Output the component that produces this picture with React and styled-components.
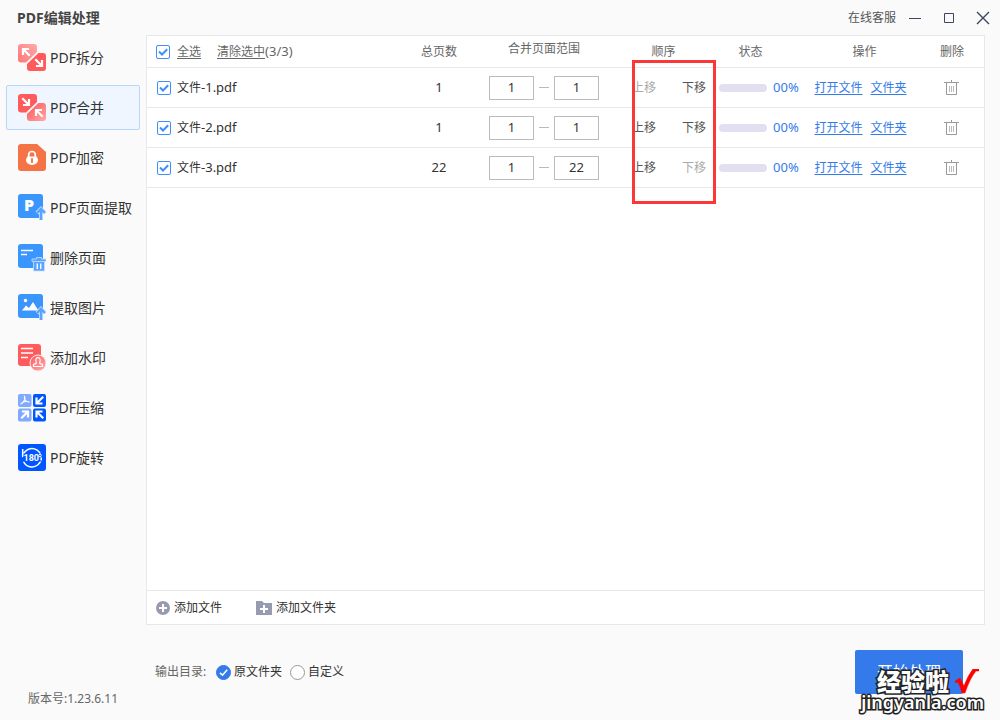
import React, { useState } from "react";
import { createGlobalStyle, styled } from "styled-components";

const GlobalStyle = createGlobalStyle`
  * {
    box-sizing: border-box;
  }

  body {
    margin: 0;
    background-color: #fafafa;
    color: #333;
    font-family: "Noto Sans", "Noto Sans CJK SC", sans-serif;
    font-size: 12px;
    line-height: 20px;
  }

  button, input {
    font: inherit;
    color: inherit;
  }

  button {
    padding: 0;
    border: 0;
    background: none;
    cursor: pointer;
  }

  svg {
    display: block;
  }
`;

const Window = styled.div`
  position: relative;
  display: flex;
  flex-direction: column;
  min-height: 100vh;
`;

const TitleBar = styled.header`
  display: flex;
  align-items: center;
  justify-content: space-between;
  height: 35px;
  padding: 0 3px 0 17px;
`;

const Title = styled.h1`
  margin: 0;
  font-size: 14px;
  font-weight: 700;
  color: #444;
`;

const WindowControls = styled.div`
  display: flex;
  align-items: center;
  gap: 5px;
  color: #555;
`;

const ControlButtons = styled.div`
  display: flex;
  gap: 6px;
`;

const ControlButton = styled.button`
  display: grid;
  place-items: center;
  width: 28px;
  height: 28px;
`;

const Body = styled.div`
  flex: 1;
  display: flex;
`;

const Sidebar = styled.aside`
  flex: none;
  display: flex;
  flex-direction: column;
  justify-content: space-between;
  width: 146px;
  padding: 0 6px 11px;
`;

const Menu = styled.nav`
  display: flex;
  flex-direction: column;
  gap: 5px;
`;

const MenuLink = styled.a`
  display: flex;
  align-items: center;
  gap: 4px;
  height: 45px;
  padding-left: 11px;
  border: 1px solid ${({ $active }) => ($active ? "#b9d6fd" : "transparent")};
  border-radius: 2px;
  background-color: ${({ $active }) => ($active ? "#eff6ff" : "transparent")};
  color: #333;
  font-size: 14px;
  text-decoration: none;
  white-space: nowrap;
`;

const Version = styled.p`
  margin: 0;
  padding-left: 22px;
  color: #666;
`;

const Latin = styled.span`
  font-size: 13px;
`;

const Content = styled.main`
  flex: 1;
  display: flex;
  flex-direction: column;
  padding-right: 15px;
`;

const Panel = styled.section`
  position: relative;
  flex: 1;
  display: flex;
  flex-direction: column;
  border: 1px solid #e8e8e8;
  background-color: #fff;
`;

const FileList = styled.div`
  flex: 1;
`;

const FileTable = styled.table`
  width: 100%;
  table-layout: fixed;
  border-collapse: separate;
  border-spacing: 0;
`;

const HeadCell = styled.th`
  width: ${({ $width }) => $width || "auto"};
  height: 32px;
  padding: ${({ $padding }) => $padding || "0"};
  border-bottom: 1px solid #e8e8e8;
  color: #666;
  font-weight: 400;
`;

const Cell = styled.td`
  height: 40px;
  padding: ${({ $padding }) => $padding || "0"};
  border-bottom: 1px solid #e8e8e8;
  text-align: center;
  white-space: nowrap;
`;

const Line = styled.div`
  display: flex;
  align-items: center;
  justify-content: ${({ $center }) => ($center ? "center" : "flex-start")};
  gap: ${({ $gap }) => $gap}px;
`;

const FileLabel = styled.label`
  display: flex;
  align-items: center;
  gap: 6px;
`;

const CheckMarkBox = styled.span`
  display: inline-grid;
  width: 14px;
  height: 14px;

  > * {
    grid-area: 1 / 1;
  }

  svg {
    pointer-events: none;
  }
`;

const CheckInput = styled.input`
  appearance: none;
  width: 14px;
  height: 14px;
  margin: 0;
  border: 1px solid #3f8ffb;
  border-radius: 2px;
  background-color: #fff;

  &:not(:checked) + svg {
    display: none;
  }
`;

const UnderlinedButton = styled.button`
  text-decoration: underline;
  text-underline-offset: 2px;
`;

const PageInput = styled.input`
  width: 45px;
  height: 24px;
  padding: 0 0 2px;
  border: 1px solid #bbb;
  background-color: #fff;
  font-size: 13px;
  text-align: center;
`;

const Dash = styled.span`
  width: 10px;
  height: 1px;
  background-color: #bbb;
`;

const MoveButton = styled.button`
  color: #555;

  &:disabled {
    color: #aaa;
    cursor: default;
  }
`;

const Progress = styled.div`
  width: 48px;
  height: 8px;
  border-radius: 4px;
  background-color: #e1dff0;
  overflow: hidden;
`;

const ProgressBar = styled.div`
  height: 100%;
  background-color: #347aeb;
`;

const Percent = styled.span`
  padding-bottom: 2px;
  color: #347aeb;
  font-size: 13px;
`;

const FileLink = styled.a`
  color: #347aeb;
  text-underline-offset: 2px;
`;

const DeleteButton = styled.button`
  display: block;
  margin: 0 auto;
`;

const PanelFooter = styled.footer`
  display: flex;
  align-items: center;
  gap: 34px;
  height: 34px;
  padding-left: 9px;
  border-top: 1px solid #e8e8e8;
`;

const AddButton = styled.button`
  display: flex;
  align-items: center;
  gap: 4px;
`;

const BottomBar = styled.div`
  display: flex;
  align-items: center;
  justify-content: space-between;
  height: 95px;
  padding: 0 22px 1px 9px;
`;

const Output = styled.fieldset`
  display: flex;
  align-items: center;
  gap: 8px;
  margin: 0;
  padding: 0;
  border: 0;
`;

const OutputTitle = styled.span`
  width: 53px;
  color: #666;
`;

const RadioLabel = styled.label`
  display: flex;
  align-items: center;
  gap: 3px;
`;

const RadioMark = styled(CheckMarkBox)`
  width: 15px;
  height: 15px;
`;

const RadioInput = styled.input`
  appearance: none;
  width: 15px;
  height: 15px;
  margin: 0;
  border: 1px solid #999;
  border-radius: 50%;
  background-color: #fff;

  &:checked {
    border-color: #347aeb;
    background-color: #347aeb;
  }

  &:not(:checked) + svg {
    display: none;
  }
`;

const StartButton = styled.button`
  width: 108px;
  height: 44px;
  border-radius: 2px;
  background-color: #347aeb;
  color: #fff;
  font-size: 16px;
`;

const Highlight = styled.div`
  position: absolute;
  top: 24px;
  right: 268px;
  width: 84px;
  height: 144px;
  border: 3px solid #fb3838;
  pointer-events: none;
`;

const Stamp = styled.div`
  position: absolute;
  right: 16px;
  bottom: 10px;
  display: flex;
  flex-direction: column;
  align-items: flex-end;
  color: #fff;
  font-weight: 900;
  -webkit-text-stroke: 3px #222;
  paint-order: stroke fill;
  pointer-events: none;
`;

const StampTop = styled.div`
  display: flex;
  gap: 6px;
  padding-right: 5px;
  font-size: 24px;
  line-height: 26px;
`;

const StampSite = styled.span`
  font-family: "Noto Sans", sans-serif;
  font-size: 18px;
  font-weight: 600;
  line-height: 15px;
`;

function Icon({ children }) {
  return (
    <svg width="28" height="28" viewBox="0 0 28 28" fill="none" aria-hidden="true">
      {children}
    </svg>
  );
}

// arrow pointing to the top left, 8px wide
function Arrow({ x, y, rotate = 0 }) {
  return (
    <g transform={`translate(${x} ${y}) rotate(${rotate})`}>
      <path d="M-3 3V-3H3M-3-3L3.700 3.700" stroke="#fff" strokeWidth="2.200" />
    </g>
  );
}

const TOP_TILE = "M3 0h13q3 0 3 3v5L8 18.500H3q-3 0-3-3V3q0-3 3-3Z";
const BOTTOM_TILE = "M20.500 9H25q3 0 3 3v12q0 3-3 3H12q-3 0-3-3v-4Z";

function SplitIcon() {
  return (
    <Icon>
      <defs>
        <linearGradient id="split" x1="0" y1="1" x2="1" y2="0">
          <stop stopColor="#ff7c7e" offset="0.1" />
          <stop stopColor="#ffa5a5" offset="0.9" />
        </linearGradient>
      </defs>
      <path d={TOP_TILE} fill="url(#split)" />
      <path d={BOTTOM_TILE} fill="#ff5a5c" />
      <Arrow x={8} y={8} />
      <Arrow x={21} y={19} rotate={180} />
    </Icon>
  );
}

function MergeIcon() {
  return (
    <Icon>
      <defs>
        <linearGradient id="merge" x1="0" y1="0" x2="1" y2="1">
          <stop stopColor="#ff6264" offset="0.2" />
          <stop stopColor="#ffaaaa" offset="1" />
        </linearGradient>
      </defs>
      <path d={TOP_TILE} fill="#ff5a5c" />
      <path d={BOTTOM_TILE} fill="url(#merge)" />
      <Arrow x={8} y={8} rotate={180} />
      <Arrow x={21} y={19} />
    </Icon>
  );
}

function LockIcon() {
  return (
    <Icon>
      <path d="M3 0h16l9 8v16q0 3-3 3H3q-3 0-3-3V3q0-3 3-3Z" fill="#f57445" />
      <path d="M10.700 13v-2.200a3.300 3.300 0 0 1 6.600 0V13" stroke="#fff" strokeWidth="1.700" />
      <path d="M9.500 12.500h9q1.500 1.500 1.500 3.500a6 5 0 0 1-12 0q0-2 1.500-3.500Z" fill="#fff" />
      <path d="M14 15v3" stroke="#f57445" strokeWidth="2" strokeLinecap="round" />
    </Icon>
  );
}

const UP_ARROW = "M23 26V15.500M19 19l4-4.200 4 4.200";

function UpArrow() {
  return (
    <>
      <path d={UP_ARROW} stroke="#c9e1ff" strokeWidth="4" />
      <path d={UP_ARROW} stroke="#5aa3ff" strokeWidth="2.400" />
    </>
  );
}

function ExtractPageIcon() {
  return (
    <Icon>
      <rect width="25" height="24" rx="3" fill="#3a95fc" />
      <text x="6" y="17" fontFamily="Open Sans" fontSize="16" fontWeight="800" fill="#fff">P</text>
      <UpArrow />
    </Icon>
  );
}

function DeletePageIcon() {
  return (
    <Icon>
      <rect width="25" height="24" rx="3" fill="#3a95fc" />
      <path d="M3 6.500h12M3 10.500h6" stroke="#fff" strokeWidth="1.700" />
      <path
        d="M14 15h4.500v-1.500h5V15H28v2.500h-1.500V27h-11v-9.500H14Z"
        fill="#5aa3ff"
        stroke="#c9e1ff"
        strokeWidth="0.800"
      />
      <path d="M19.300 19.500v5.500M22.700 19.500v5.500" stroke="#fff" strokeWidth="1.400" />
      <path d="M15.500 17.500h11" stroke="#c9e1ff" strokeWidth="0.800" />
    </Icon>
  );
}

function ExtractImageIcon() {
  return (
    <Icon>
      <rect width="25" height="24" rx="3" fill="#3a95fc" />
      <circle cx="7.500" cy="6.500" r="1.700" fill="#fff" />
      <path d="M4 16.500l4-5 3 2.500 4-6 5.500 8.500Z" fill="#fff" />
      <UpArrow />
    </Icon>
  );
}

function WatermarkIcon() {
  return (
    <Icon>
      <defs>
        <linearGradient id="seal" x1="0" y1="0" x2="1" y2="1">
          <stop stopColor="#ff6264" offset="0.1" />
          <stop stopColor="#ffaaaa" offset="1" />
        </linearGradient>
      </defs>
      <rect width="23" height="22" rx="3" fill="#ff5a5c" />
      <path d="M3 4.500h12M3 9h12M3 13.500h7" stroke="#fff" strokeWidth="1.700" />
      <circle cx="20" cy="19" r="8" fill="url(#seal)" stroke="#ffe6e6" />
      <path
        d="M15.500 22.500v-1.800q0-.9 1-.9h1.300q1-.8.2-2.600a2.200 2.500 0 1 1 4 0q-.8 1.800.2 2.600h1.300q1 0 1 .9v1.800Z"
        stroke="#fff"
        strokeWidth="1.200"
      />
    </Icon>
  );
}

function CompressIcon() {
  return (
    <Icon>
      <rect width="13.500" height="13" rx="2" fill="#80a9ff" />
      <rect x="15" width="13" height="13" rx="2" fill="#0057ff" />
      <rect y="14.500" width="13.500" height="13" rx="2" fill="#80a9ff" />
      <rect x="15" y="14.500" width="13" height="13" rx="2" fill="#0057ff" />
      <path
        d="M6.300 2q1.200 1.500.2 4Q5 9 2.800 10M6.300 4q.5 3.300 4.700 4.300M4 8.700q3-1.700 7-1"
        stroke="#fff"
        strokeWidth="1.100"
        strokeLinecap="round"
      />
      <Arrow x={21.500} y={6.500} rotate={-90} />
      <Arrow x={7} y={20.500} rotate={90} />
      <Arrow x={21.500} y={20.500} />
    </Icon>
  );
}

function RotateIcon() {
  return (
    <Icon>
      <rect width="28" height="27" rx="3" fill="#0057ff" />
      <path d="M5.500 17.500a9.200 9.200 0 1 0-.5-6" stroke="#fff" strokeWidth="1.500" />
      <path d="M4.700 5v7.500h4" stroke="#fff" strokeWidth="1.500" />
      <rect x="5" y="9.500" width="19" height="8" fill="#0057ff" />
      <path d="M4.700 9v3.500M23.200 13.500v3" stroke="#fff" strokeWidth="1.500" />
      <text x="5.500" y="17" fontFamily="Roboto" fontSize="9" fontWeight="700" fill="#fff">180</text>
      <circle cx="22" cy="11.500" r="1.300" stroke="#fff" />
    </Icon>
  );
}

function TrashIcon() {
  return (
    <svg width="15" height="16" viewBox="0 0 15 16" fill="none" stroke="#999" aria-hidden="true">
      <path d="M0 2.500h15M7.500 0v2M2.500 3v11.500h10V3" />
      <path d="M5.500 6v6M7.500 6v6M9.500 6v6" stroke="#bbb" />
    </svg>
  );
}

function Checkbox(props) {
  return (
    <CheckMarkBox>
      <CheckInput type="checkbox" {...props} />
      <svg width="14" height="14" viewBox="0 0 14 14" fill="none" aria-hidden="true">
        <path d="M3 6.500l3 3 5.200-5.200" stroke="#3f8ffb" strokeWidth="2" />
      </svg>
    </CheckMarkBox>
  );
}

function Radio(props) {
  return (
    <RadioMark>
      <RadioInput type="radio" name="output" {...props} />
      <svg width="15" height="15" viewBox="0 0 15 15" fill="none" aria-hidden="true">
        <path d="M4 7.800l2.500 2.400 4.700-5.400" stroke="#fff" strokeWidth="1.600" />
      </svg>
    </RadioMark>
  );
}

const MENU = [
  { id: "split", label: "PDF拆分", icon: SplitIcon },
  { id: "merge", label: "PDF合并", icon: MergeIcon },
  { id: "encrypt", label: "PDF加密", icon: LockIcon },
  { id: "extract-page", label: "PDF页面提取", icon: ExtractPageIcon },
  { id: "delete-page", label: "删除页面", icon: DeletePageIcon },
  { id: "extract-image", label: "提取图片", icon: ExtractImageIcon },
  { id: "watermark", label: "添加水印", icon: WatermarkIcon },
  { id: "compress", label: "PDF压缩", icon: CompressIcon },
  { id: "rotate", label: "PDF旋转", icon: RotateIcon },
];

const FILES = [
  { id: 1, pages: 1, progress: 0 },
  { id: 2, pages: 1, progress: 0 },
  { id: 3, pages: 22, progress: 0 },
];

function FileRow({ file, isFirst, isLast, checked, onToggle, onMove, onDelete }) {
  return (
    <tr>
      <Cell $padding="0 0 0 10px">
        <FileLabel>
          <Checkbox checked={checked} onChange={onToggle} />
          <span>文件<Latin>-{file.id}.pdf</Latin></span>
        </FileLabel>
      </Cell>
      <Cell><Latin>{file.pages}</Latin></Cell>
      <Cell>
        <Line $center $gap={5}>
          <PageInput defaultValue={1} aria-label="起始页" />
          <Dash />
          <PageInput defaultValue={file.pages} aria-label="结束页" />
        </Line>
      </Cell>
      <Cell $padding="0 0 0 21px">
        <Line $gap={26}>
          <MoveButton disabled={isFirst} onClick={() => onMove(-1)}>上移</MoveButton>
          <MoveButton disabled={isLast} onClick={() => onMove(1)}>下移</MoveButton>
        </Line>
      </Cell>
      <Cell $padding="0 0 0 3px">
        <Line $gap={6}>
          <Progress>
            <ProgressBar style={{ width: `${file.progress}%` }} />
          </Progress>
          <Percent>{String(file.progress).padStart(2, "0")}%</Percent>
        </Line>
      </Cell>
      <Cell $padding="0 2px 0 0">
        <Line $center $gap={8}>
          <FileLink href="#open">打开文件</FileLink>
          <FileLink href="#folder">文件夹</FileLink>
        </Line>
      </Cell>
      <Cell $padding="0 2px 0 0">
        <DeleteButton aria-label="删除" onClick={onDelete}><TrashIcon /></DeleteButton>
      </Cell>
    </tr>
  );
}

function App() {
  const [active, setActive] = useState("merge");
  const [files, setFiles] = useState(FILES);
  const [selected, setSelected] = useState([1, 2, 3]);
  const [output, setOutput] = useState("source");

  const selectAll = () => setSelected(files.map((file) => file.id));
  const allSelected = selected.length === files.length;

  const toggle = (id) => {
    setSelected(selected.includes(id) ? selected.filter((item) => item !== id) : [...selected, id]);
  };

  const move = (index, step) => {
    const next = [...files];
    [next[index], next[index + step]] = [next[index + step], next[index]];
    setFiles(next);
  };

  const remove = (id) => {
    setFiles(files.filter((file) => file.id !== id));
    setSelected(selected.filter((item) => item !== id));
  };

  return (
    <Window>
      <GlobalStyle />
      <TitleBar>
        <Title>PDF编辑处理</Title>
        <WindowControls>
          <button>在线客服</button>
          <ControlButtons>
            <ControlButton aria-label="最小化">
              <svg width="14" height="14" stroke="#3d4560"><path d="M1 7.500h12" /></svg>
            </ControlButton>
            <ControlButton aria-label="最大化">
              <svg width="14" height="14" stroke="#3d4560" fill="none"><path d="M2.500 2.500h9v9h-9Z" /></svg>
            </ControlButton>
            <ControlButton aria-label="关闭">
              <svg width="14" height="14" stroke="#3d4560" strokeWidth="1.400"><path d="M1 1l12 12M13 1L1 13" /></svg>
            </ControlButton>
          </ControlButtons>
        </WindowControls>
      </TitleBar>
      <Body>
        <Sidebar>
          <Menu>
            {MENU.map(({ id, label, icon: MenuIcon }) => (
              <MenuLink key={id} href={`#${id}`} $active={active === id} onClick={() => setActive(id)}>
                <MenuIcon />
                {label}
              </MenuLink>
            ))}
          </Menu>
          <Version>版本号:1.23.6.11</Version>
        </Sidebar>
        <Content>
          <Panel>
            <FileList>
              <FileTable>
                <thead>
                  <tr>
                    <HeadCell $padding="0 0 0 9px">
                      <Line $gap={7}>
                        <Checkbox
                          aria-label="全选"
                          checked={allSelected}
                          onChange={() => (allSelected ? setSelected([]) : selectAll())}
                        />
                        <Line $gap={16}>
                          <UnderlinedButton onClick={selectAll}>全选</UnderlinedButton>
                          <span>
                            <UnderlinedButton onClick={() => setSelected([])}>清除选中</UnderlinedButton>
                            <Latin>({selected.length}/{files.length})</Latin>
                          </span>
                        </Line>
                      </Line>
                    </HeadCell>
                    <HeadCell $width="76px">总页数</HeadCell>
                    <HeadCell $width="134px" $padding="0 0 6px">合并页面范围</HeadCell>
                    <HeadCell $width="105px">顺序</HeadCell>
                    <HeadCell $width="87px" $padding="0 18px 0 0">状态</HeadCell>
                    <HeadCell $width="117px" $padding="0 0 0 6px">操作</HeadCell>
                    <HeadCell $width="64px">删除</HeadCell>
                  </tr>
                </thead>
                <tbody>
                  {files.map((file, index) => (
                    <FileRow
                      key={file.id}
                      file={file}
                      isFirst={index === 0}
                      isLast={index === files.length - 1}
                      checked={selected.includes(file.id)}
                      onToggle={() => toggle(file.id)}
                      onMove={(step) => move(index, step)}
                      onDelete={() => remove(file.id)}
                    />
                  ))}
                </tbody>
              </FileTable>
            </FileList>
            <PanelFooter>
              <AddButton>
                <svg width="14" height="14" viewBox="0 0 14 14" aria-hidden="true">
                  <circle cx="7" cy="7" r="7" fill="#969bb0" />
                  <path d="M7 3v8M3 7h8" stroke="#fff" strokeWidth="2" />
                </svg>
                添加文件
              </AddButton>
              <AddButton>
                <svg width="16" height="14" viewBox="0 0 16 14" aria-hidden="true">
                  <path d="M0 0h6l2 2h8v12H0Z" fill="#969bb0" />
                  <path d="M8 4v8M4 8h8" stroke="#fff" strokeWidth="2" />
                </svg>
                添加文件夹
              </AddButton>
            </PanelFooter>
            <Highlight />
          </Panel>
          <BottomBar>
            <Output aria-label="输出目录">
              <OutputTitle>输出目录:</OutputTitle>
              <RadioLabel>
                <Radio checked={output === "source"} onChange={() => setOutput("source")} />
                原文件夹
              </RadioLabel>
              <RadioLabel>
                <Radio checked={output === "custom"} onChange={() => setOutput("custom")} />
                自定义
              </RadioLabel>
            </Output>
            <StartButton>开始处理</StartButton>
          </BottomBar>
        </Content>
      </Body>
      <Stamp>
        <StampTop>
          经验啦
          <svg width="24" height="26" viewBox="0 0 24 26" aria-hidden="true">
            <path d="M0 12l5-3 4 8Q13 6 18 0h6v2h-3Q15 9 10 24H7Q5 17 3 13L1 14Z" fill="#f00" stroke="#f00" strokeWidth="0.500" />
          </svg>
        </StampTop>
        <StampSite>jingyanla.com</StampSite>
      </Stamp>
    </Window>
  );
}

export default App;
